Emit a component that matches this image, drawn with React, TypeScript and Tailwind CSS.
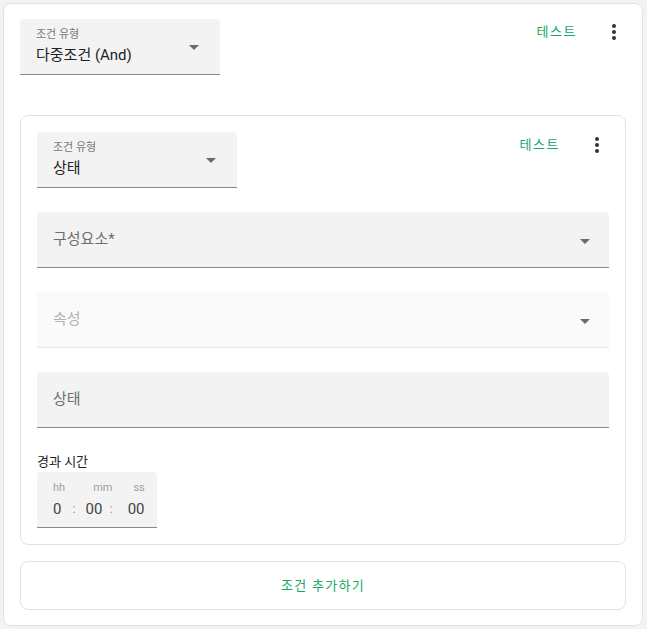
import { MdArrowDropDown } from "react-icons/md";

const font = { fontFamily: 'Roboto, "Noto Sans CJK KR", sans-serif' };

const Dots = () => (
  <svg viewBox="0 0 24 24" className="h-6 w-6 fill-[#333]">
    <path d="M12,16A2,2 0 0,1 14,18A2,2 0 0,1 12,20A2,2 0 0,1 10,18A2,2 0 0,1 12,16M12,10A2,2 0 0,1 14,12A2,2 0 0,1 12,14A2,2 0 0,1 10,12A2,2 0 0,1 12,10M12,4A2,2 0 0,1 14,6A2,2 0 0,1 12,8A2,2 0 0,1 10,6A2,2 0 0,1 12,4Z" />
  </svg>
);

const TypeSelect = ({ value }: { value: string }) => (
  <div className="relative h-14 w-[200px] rounded-t bg-[#f3f3f3] border-b border-[#8a8a8a] pl-4 pr-10">
    <div className="pt-[8px] text-[11px] leading-4 text-[#777]">조건 유형</div>
    <div className="text-[15px] leading-6 text-[#222]">{value}</div>
    <MdArrowDropDown className="absolute right-[14px] top-[16px] h-6 w-6 text-[#6b6b6b]" />
  </div>
);

const Actions = () => (
  <div className="flex items-center gap-[25px] pt-[1px]">
    <span className="text-[13px] tracking-[0.12em] text-[#16a866]">테스트</span>
    <Dots />
  </div>
);

const Field = ({ label, dropdown, disabled }: { label: string; dropdown?: boolean; disabled?: boolean }) => (
  <div
    className={
      "relative flex h-14 items-center rounded-t px-4 border-b " +
      (disabled ? "bg-[#fafafa] border-[#e6e6e6]" : "bg-[#f3f3f3] border-[#8a8a8a]")
    }
  >
    <span className={"text-[15px] " + (disabled ? "text-[#b3b3b3]" : "text-[#6e6e6e]")}>{label}</span>
    {dropdown && <MdArrowDropDown className="absolute right-[12px] top-[17px] h-6 w-6 text-[#6b6b6b]" />}
  </div>
);

export default function App() {
  return (
    <div className="min-h-screen bg-[#f3f3f3] p-[3px] pr-[4px]" style={font}>
      <div className="rounded-lg border border-[#e2e2e2] bg-white px-4 pt-[15px] pb-[15px]">
        <div className="flex items-start justify-between">
          <TypeSelect value="다중조건 (And)" />
          <Actions />
        </div>

        <div className="mt-10 rounded-lg border border-[#e2e2e2] px-4 pt-4 pb-4">
          <div className="flex items-start justify-between">
            <TypeSelect value="상태" />
            <Actions />
          </div>
          <div className="mt-6 flex flex-col gap-6">
            <Field label="구성요소*" dropdown />
            <Field label="속성" dropdown disabled />
            <Field label="상태" />
          </div>
          <div className="mt-[24px] text-[13px] leading-5 text-[#222]">경과 시간</div>
          <div className="w-[120px] h-14 rounded-t bg-[#f3f3f3] border-b border-[#8a8a8a] pl-4 pt-[8px] whitespace-nowrap">
            <div className="flex text-[11px] leading-4 text-[#a0a0a0]">
              <span>hh</span>
              <span className="ml-[28px]">mm</span>
              <span className="ml-[21px]">ss</span>
            </div>
            <div className="mt-[3px] flex items-center text-[15px] leading-5 text-[#444]">
              <span>0</span>
              <span className="ml-[11px] text-[13px] text-[#999]">:</span>
              <span className="ml-[10px]">00</span>
              <span className="ml-[7px] text-[13px] text-[#999]">:</span>
              <span className="ml-[15px]">00</span>
            </div>
          </div>
        </div>

        <div className="mt-4 flex h-[49px] items-center justify-center rounded-lg border border-[#e2e2e2]">
          <span className="text-[13px] tracking-[0.1em] text-[#16a866]">조건 추가하기</span>
        </div>
      </div>
    </div>
  );
}
